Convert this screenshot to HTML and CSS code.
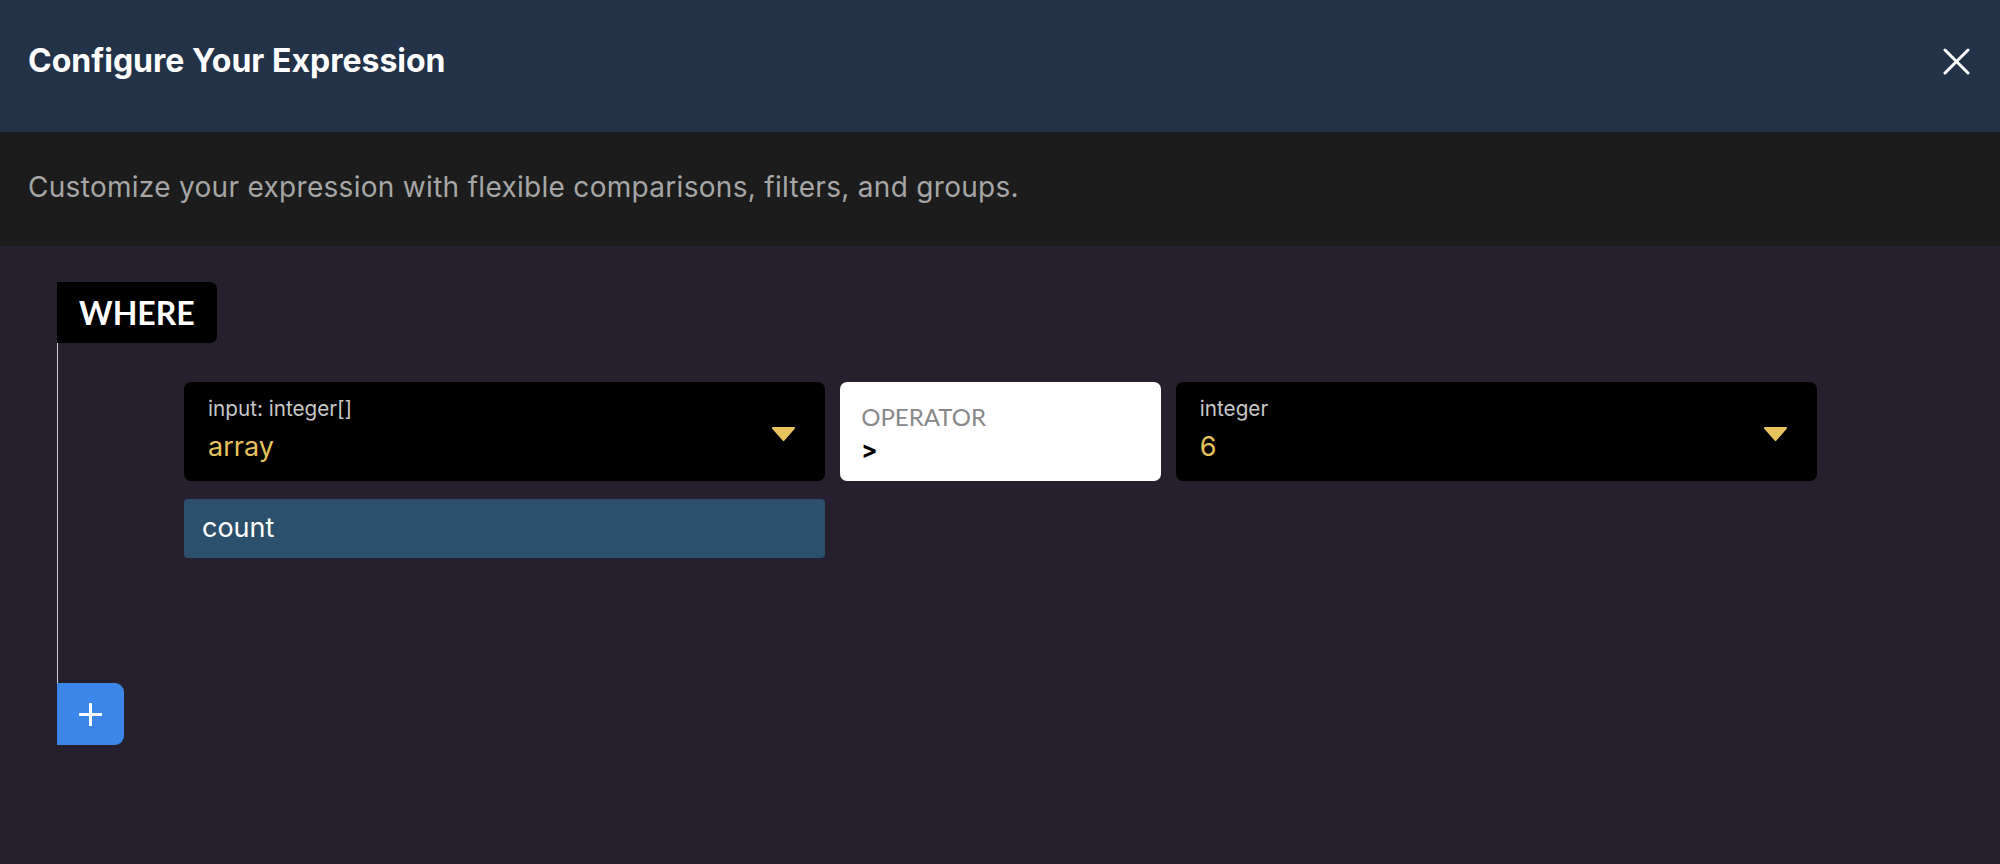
FILE: index.html
```html
<!DOCTYPE html>
<html lang="en">
<head>
    <meta charset="UTF-8">
    <meta name="viewport" content="width=device-width, initial-scale=1.0">
    <title>Configure Your Expression</title>
    <link rel="stylesheet" href="styles.css">
</head>
<body>
    <header class="modal-header">
        <h1>Configure Your Expression</h1>
        <button class="close-btn" aria-label="Close">
            <svg width="27" height="27" viewBox="0 0 27 27">
                <path d="M2 2 L25 25 M25 2 L2 25" stroke="#fff" stroke-width="3" stroke-linecap="round" fill="none"/>
            </svg>
        </button>
    </header>

    <div class="modal-desc">
        Customize your expression with flexible comparisons, filters, and groups.
    </div>

    <main class="builder">
        <div class="where-tag">WHERE</div>

        <div class="group-body">
            <div class="condition">
                <div class="select">
                    <div class="select-text">
                        <span class="select-label">input: integer[]</span>
                        <span class="select-value">array</span>
                    </div>
                    <svg class="caret" width="25" height="14" viewBox="0 0 25 14">
                        <path d="M2 1 L23 1 L12.5 13 Z" fill="#e6c35c" stroke="#e6c35c" stroke-width="2" stroke-linejoin="round"/>
                    </svg>
                </div>

                <div class="operator">
                    <span class="operator-label">OPERATOR</span>
                    <span class="operator-value">&gt;</span>
                </div>

                <div class="select">
                    <div class="select-text">
                        <span class="select-label">integer</span>
                        <span class="select-value">6</span>
                    </div>
                    <svg class="caret" width="25" height="14" viewBox="0 0 25 14">
                        <path d="M2 1 L23 1 L12.5 13 Z" fill="#e6c35c" stroke="#e6c35c" stroke-width="2" stroke-linejoin="round"/>
                    </svg>
                </div>

                <div class="modifier">count</div>
            </div>
        </div>

        <button class="add-btn" aria-label="Add">
            <svg width="25" height="25" viewBox="0 0 25 25">
                <path d="M12.5 1 L12.5 24 M1 12.5 L24 12.5" stroke="#fff" stroke-width="3" fill="none"/>
            </svg>
        </button>
    </main>
</body>
</html>
```

FILE: styles.css
```css
body {
    margin: 0;
    font-family: Inter, "Noto Sans", sans-serif;
    background-color: #261f2d;
    color: #fff;
}

.modal-header {
    display: flex;
    justify-content: space-between;
    align-items: flex-start;
    box-sizing: border-box;
    height: 132px;
    padding: 41px 30px 0 28px;
    background-color: #213249;
}

.modal-header h1 {
    margin: 0;
    font-size: 32px;
    line-height: 40px;
    font-weight: 700;
}

.close-btn {
    margin-top: 7px;
    padding: 0;
    border: none;
    background: none;
    cursor: pointer;
    display: flex;
}

.modal-desc {
    box-sizing: border-box;
    height: 114px;
    padding: 37px 28px 0;
    background-color: #1c1c1c;
    color: #a6a6a6;
    font-size: 28px;
    line-height: 36px;
    letter-spacing: 0.3px;
}

.builder {
    padding: 36px 57px 0;
}

.where-tag {
    display: inline-block;
    padding: 11px 22px 10px;
    background-color: #000;
    border-radius: 0 7px 7px 0;
    font-family: Lato, Inter, sans-serif;
    font-size: 32px;
    line-height: 40px;
    font-weight: 700;
}

.group-body {
    border-left: 1px solid #d0d0d0;
    padding: 39px 126px 125px;
}

.condition {
    display: grid;
    grid-template-columns: 2fr 1fr 2fr;
    column-gap: 15px;
    row-gap: 18px;
}

.select {
    display: flex;
    justify-content: space-between;
    align-items: center;
    height: 99px;
    box-sizing: border-box;
    padding: 0 29px 0 24px;
    background-color: #000;
    border-radius: 7px;
}

.select-text {
    display: flex;
    flex-direction: column;
    gap: 9px;
    margin-top: -3px;
}

.select-label {
    color: #c8c8c8;
    font-size: 20.7px;
    line-height: 24px;
}

.select-value {
    color: #e6c35c;
    font-size: 27px;
    line-height: 34px;
}

.caret {
    margin-top: 5px;
}

.operator {
    display: flex;
    flex-direction: column;
    gap: 5px;
    height: 99px;
    box-sizing: border-box;
    padding: 21px 21px 0;
    background-color: #fff;
    border-radius: 7px;
}

.operator-label {
    font-family: Lato, Inter, sans-serif;
    color: #888;
    font-size: 24px;
    line-height: 28px;
}

.operator-value {
    color: #000;
    font-size: 24px;
    line-height: 28px;
    font-weight: 700;
}

.modifier {
    grid-column: 1;
    height: 59px;
    box-sizing: border-box;
    padding: 12px 18px 0;
    background-color: #2c4f6b;
    border-radius: 4px;
    font-size: 27px;
    line-height: 34px;
}

.add-btn {
    display: flex;
    align-items: center;
    justify-content: center;
    width: 67px;
    height: 62px;
    padding: 0;
    border: none;
    border-radius: 0 9px 9px 0;
    background-color: #3b86e8;
    cursor: pointer;
}
```
